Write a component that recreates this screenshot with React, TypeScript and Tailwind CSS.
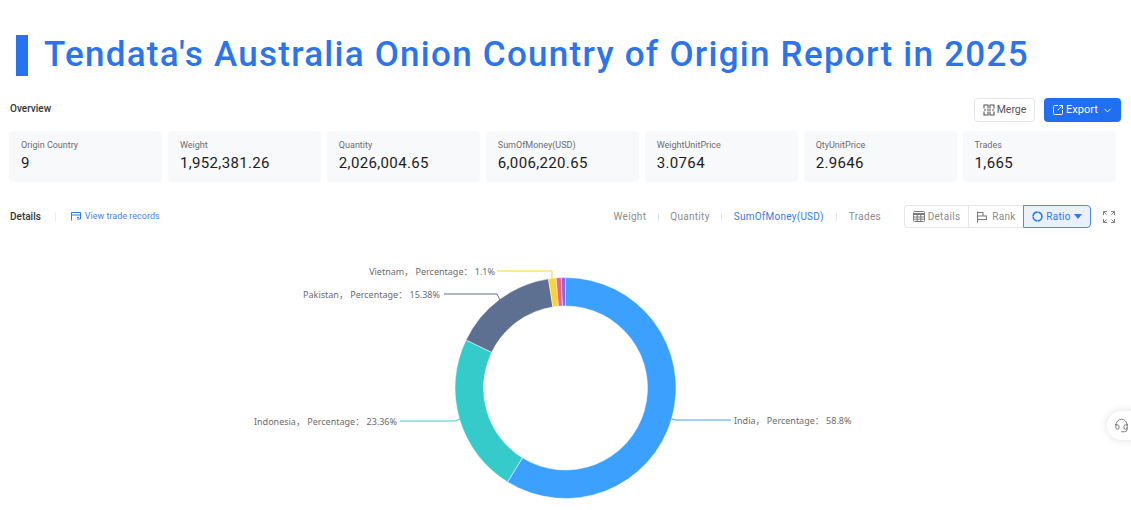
import { ChevronDown, SquareArrowOutUpRight, Headset } from 'lucide-react';

const stats = [
    { label: 'Origin Country', value: '9' },
    { label: 'Weight', value: '1,952,381.26' },
    { label: 'Quantity', value: '2,026,004.65' },
    { label: 'SumOfMoney(USD)', value: '6,006,220.65' },
    { label: 'WeightUnitPrice', value: '3.0764' },
    { label: 'QtyUnitPrice', value: '2.9646' },
    { label: 'Trades', value: '1,665' },
];

const slices = [
    { pct: 58.8, color: '#3ba0ff' },
    { pct: 23.36, color: '#36cbcb' },
    { pct: 15.38, color: '#5d7092' },
    { pct: 1.1, color: '#fad337' },
    { pct: 0.76, color: '#f2637b' },
    { pct: 0.6, color: '#9760e4' },
];

const CX = 565.5;
const CY = 138;
const R = 110.5;
const r = 82;

function arc(start: number, end: number) {
    const pt = (rad: number, pct: number) => {
        const a = (pct / 100) * Math.PI * 2;
        return `${(CX + rad * Math.sin(a)).toFixed(2)} ${(CY - rad * Math.cos(a)).toFixed(2)}`;
    };
    const large = end - start > 50 ? 1 : 0;
    return `M${pt(R, start)} A${R} ${R} 0 ${large} 1 ${pt(R, end)} L${pt(r, end)} A${r} ${r} 0 ${large} 0 ${pt(r, start)} Z`;
}

function Donut() {
    let acc = 0;
    return (
        <svg width="1131" height="260" viewBox="0 0 1131 260" className="block">
            {slices.map((s) => {
                const d = arc(acc, acc + s.pct);
                acc += s.pct;
                return <path key={s.color} d={d} fill={s.color} stroke="#ffffff" strokeWidth="0.5" />;
            })}
            <g fill="none" strokeWidth="1">
                <polyline points="497,21 552,21 552,30" stroke="#fad337" />
                <polyline points="444,44 497,44 500,50" stroke="#5d7092" />
                <polyline points="400,171 455,171 460,169" stroke="#36cbcb" />
                <polyline points="731,170 676,170 672,169" stroke="#3ba0ff" />
            </g>
            <g fontFamily="'Noto Sans', 'Noto Sans CJK SC', sans-serif" fontSize="9" fill="#6b6b6b">
                <text x="495" y="24.5" textAnchor="end">Vietnam， Percentage： 1.1%</text>
                <text x="440" y="47.5" textAnchor="end">Pakistan， Percentage： 15.38%</text>
                <text x="397" y="174.5" textAnchor="end">Indonesia， Percentage： 23.36%</text>
                <text x="734" y="173.5">India， Percentage： 58.8%</text>
            </g>
        </svg>
    );
}

function MergeIcon() {
    return (
        <svg width="12" height="12" viewBox="0 0 12 12" fill="none" stroke="#555" strokeWidth="1.1">
            <path d="M5 4.5V1H1v3.5M7 4.5V1h4v3.5M5 7.5V11H1V7.5M7 7.5V11h4V7.5" />
            <path d="M1 6h2M4 6h4M9 6h2" />
        </svg>
    );
}

function TableIcon() {
    return (
        <svg width="12" height="11" viewBox="0 0 12 11" fill="none" stroke="#7a7a7a" strokeWidth="1">
            <rect x="0.5" y="0.5" width="11" height="10" rx="1" />
            <path d="M0.5 3h11" strokeWidth="2" />
            <path d="M0.5 6h11M0.5 8.2h11M4.2 3v7.5M7.8 3v7.5" />
        </svg>
    );
}

function RankIcon() {
    return (
        <svg width="12" height="12" viewBox="0 0 12 12" fill="none" stroke="#7a7a7a" strokeWidth="1.1">
            <path d="M1.5 0.5v11M1.5 1.5h5.5v3.5H1.5M1.5 5h9v3.5h-9" />
        </svg>
    );
}

function TradeIcon() {
    return (
        <svg width="10" height="9" viewBox="0 0 10 9" fill="none" stroke="#2f77ec" strokeWidth="1">
            <path d="M0.5 8.5V0.5h9v6.5H6M0.5 3h9" />
            <path d="M6 5.5h2" />
        </svg>
    );
}

function RatioIcon() {
    return (
        <svg width="11" height="11" viewBox="0 0 11 11" fill="none" stroke="#2f77ec" strokeWidth="1.6">
            <circle cx="5.5" cy="5.5" r="4.4" strokeDasharray="6.4 0.6" />
        </svg>
    );
}

function FullscreenIcon() {
    return (
        <svg width="12" height="12" viewBox="0 0 12 12" fill="none" stroke="#707070" strokeWidth="0.9">
            <path d="M0.5 4V0.5H4M8 0.5h3.5V4M11.5 8v3.5H8M4 11.5H0.5V8" />
            <path d="M1 1l2.5 2.5M11 1L8.5 3.5M11 11L8.5 8.5M1 11l2.5-2.5" />
        </svg>
    );
}

export default function App() {
    return (
        <div className="relative h-[510px] w-[1131px] overflow-hidden bg-white font-['Roboto',sans-serif]">
            {/* Title */}
            <div className="mt-[35px] flex h-[41px] items-center gap-4 pl-4">
                <div className="h-[41px] w-3 bg-[#2673f2]" />
                <h1 className="pb-[2px] text-[35px] font-medium leading-none tracking-[1.26px] text-[#2b74ee]">
                    Tendata's Australia Onion Country of Origin Report in 2025
                </h1>
            </div>

            {/* Overview */}
            <div className="mt-[22px] flex h-6 items-center justify-between px-[10px]">
                <span className="pb-1 text-[10px] font-medium text-[#333]">Overview</span>
                <div className="flex gap-[9px]">
                    <button className="flex h-6 w-[61px] items-center justify-center gap-[2px] rounded-sm border border-[#e3e6eb] text-[10.5px] text-[#555]">
                        <MergeIcon /> Merge
                    </button>
                    <button className="flex h-6 w-[77px] items-center justify-center gap-[2px] rounded-sm bg-[#1f6ff0] text-[11px] text-white">
                        <SquareArrowOutUpRight size={12} /> Export <ChevronDown size={11} className="ml-0.5" />
                    </button>
                </div>
            </div>

            {/* Cards */}
            <div className="mt-[9px] grid w-[1116px] grid-cols-7 gap-[5.5px] pl-[9px]">
                {stats.map((s) => (
                    <div key={s.label} className="h-[51px] rounded-sm bg-[#f8f9fb] pl-3 pt-2">
                        <div className="text-[9px] leading-[12px] text-[#6d6d6d]">{s.label}</div>
                        <div className="mt-[3px] text-[15px] leading-[18px] tracking-[0.35px] text-[#1c1c1c]">{s.value}</div>
                    </div>
                ))}
            </div>

            {/* Details toolbar */}
            <div className="mt-[23px] flex h-[23px] items-center pl-[10px]">
                <span className="text-[10px] font-medium text-[#333]">Details</span>
                <span className="ml-[14px] h-[10px] w-px bg-[#eceef1]" />
                <span className="ml-[15px] flex items-center gap-[4px] text-[9px] text-[#4a82e4]">
                    <TradeIcon /> View trade records
                </span>
                <div className="ml-auto flex items-center text-[10px] tracking-[0.3px] text-[#8c8c8c]">
                    <span>Weight</span>
                    <span className="mx-[11.5px] h-[8px] w-px bg-[#e4e6ea]" />
                    <span>Quantity</span>
                    <span className="mx-[11.5px] h-[8px] w-px bg-[#e4e6ea]" />
                    <span className="tracking-[0.25px] text-[#3a7be8]">SumOfMoney(USD)</span>
                    <span className="mx-[12px] h-[8px] w-px bg-[#e4e6ea]" />
                    <span>Trades</span>
                </div>
                <div className="ml-[23px] flex h-[23px] text-[10px] tracking-[0.3px] text-[#8c8c8c]">
                    <div className="flex w-[64px] items-center justify-center gap-[3px] rounded-l-sm border border-r-0 border-[#e3e6eb]">
                        <TableIcon /> Details
                    </div>
                    <div className="flex w-[55px] items-center justify-center gap-1 border border-r-0 border-[#e3e6eb]">
                        <RankIcon /> Rank
                    </div>
                    <div className="flex w-[68px] items-center justify-center gap-[3px] rounded-r-sm border border-[#4a8cf0] bg-[#e8f1fd] text-[#2f77ec]">
                        <RatioIcon />
                        Ratio
                        <span className="h-0 w-0 border-x-[4.5px] border-t-[5px] border-x-transparent border-t-[#2f77ec]" />
                    </div>
                </div>
                <div className="ml-[12px] mr-[16px]">
                    <FullscreenIcon />
                </div>
            </div>

            {/* Chart */}
            <div className="mt-[22px]">
                <Donut />
            </div>

            {/* Support bubble */}
            <div className="absolute left-[1107px] top-[411px] flex h-[29px] w-[40px] items-center rounded-full bg-white pl-[7px] shadow-[0_0_8px_rgba(0,0,0,0.12)]">
                <Headset size={15} strokeWidth={1.3} className="text-[#666]" />
            </div>
        </div>
    );
}
